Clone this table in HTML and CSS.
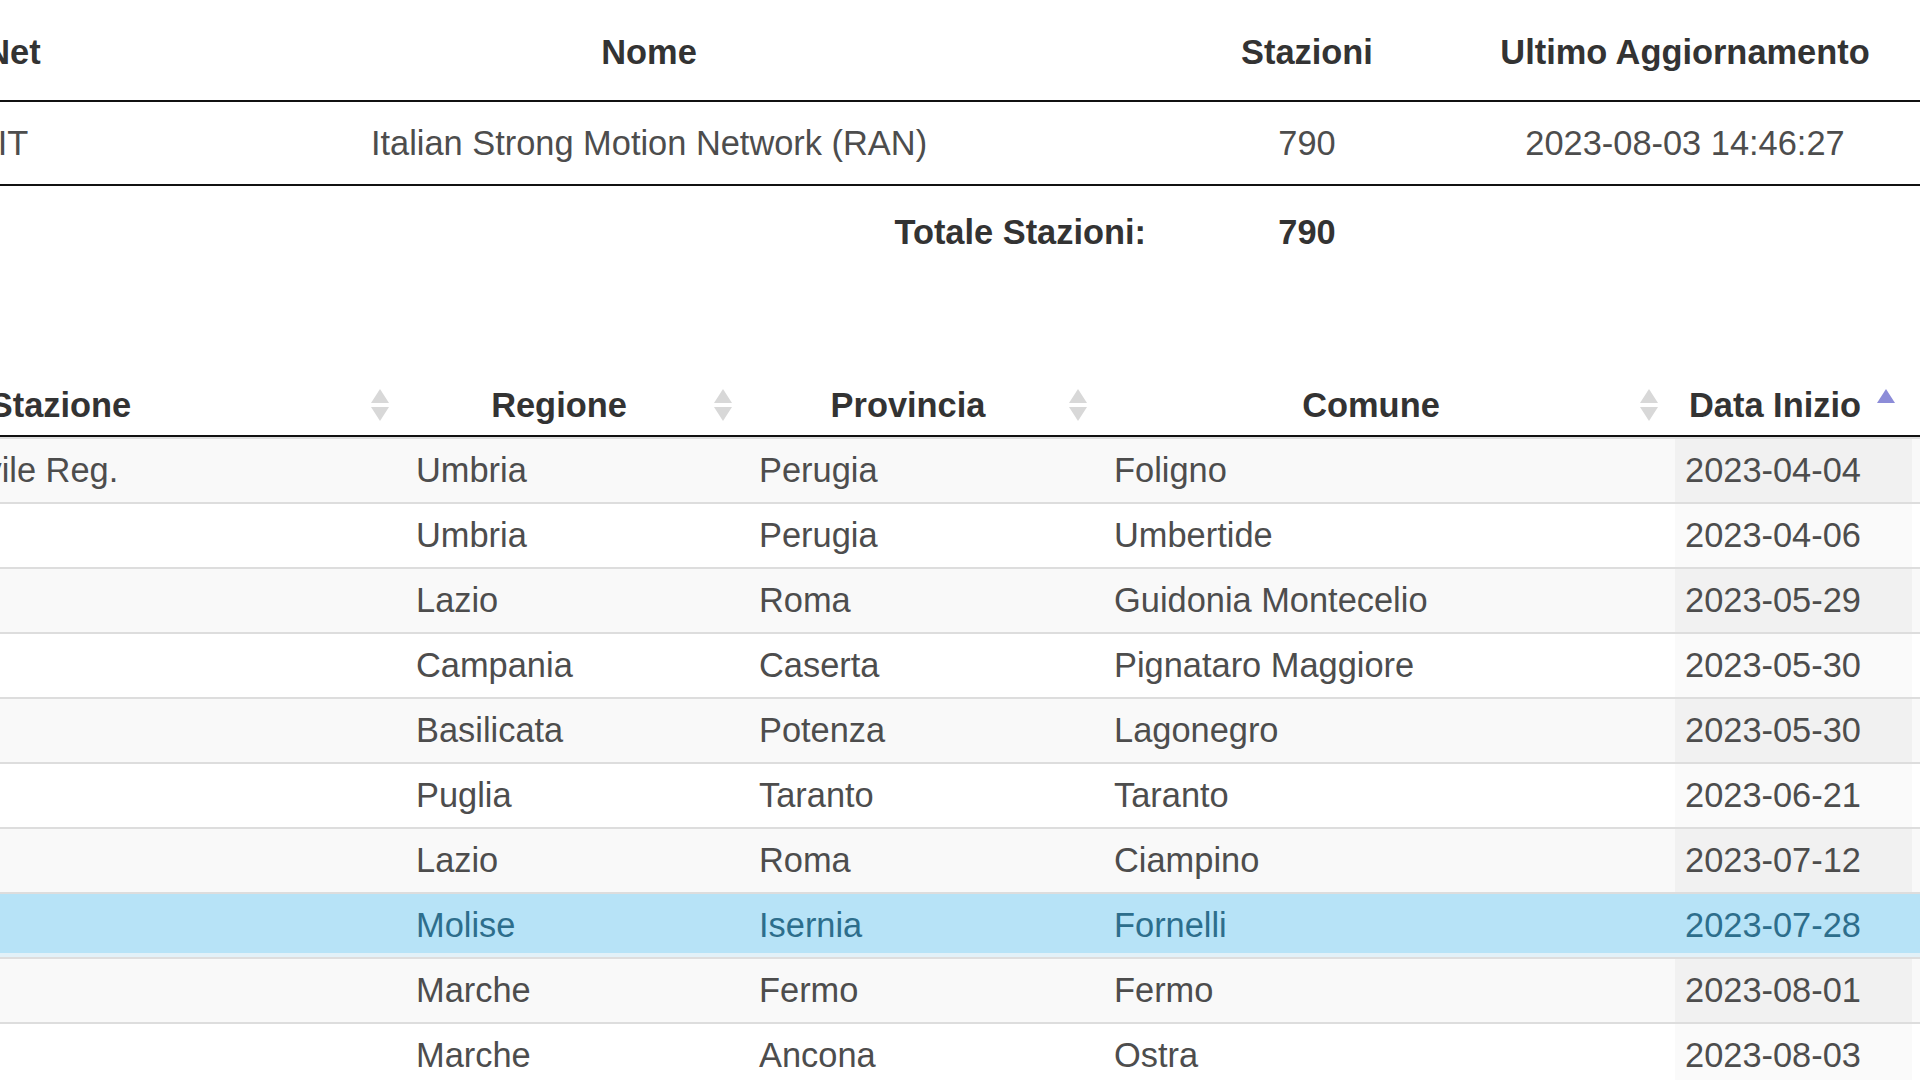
FILE: index.html
```html
<!DOCTYPE html>
<html lang="it">
<head>
<meta charset="utf-8">
<title>Stazioni</title>
<link rel="stylesheet" href="styles.css">
</head>
<body>
<div class="page">
  <div class="net-table">
    <div class="net-row net-head">
      <div class="cell">Net</div>
      <div class="cell">Nome</div>
      <div class="cell">Stazioni</div>
      <div class="cell">Ultimo Aggiornamento</div>
      <div class="cell"></div>
    </div>
    <div class="net-row net-body">
      <div class="cell">IT</div>
      <div class="cell">Italian Strong Motion Network (RAN)</div>
      <div class="cell">790</div>
      <div class="cell">2023-08-03 14:46:27</div>
      <div class="cell"></div>
    </div>
    <div class="net-row net-total">
      <div class="cell total-label">Totale Stazioni:</div>
      <div class="cell">790</div>
      <div class="cell"></div>
      <div class="cell"></div>
    </div>
  </div>

  <div class="st-table">
    <div class="st-row st-head">
      <div class="th"><span class="th-text">Stazione</span><svg class="sort" width="22" height="34" viewBox="0 0 22 34"><path d="M11 1 L20 15 H2 Z"/><path d="M2 19 H20 L11 33 Z"/></svg></div>
      <div class="th"><span class="th-text">Regione</span><svg class="sort" width="22" height="34" viewBox="0 0 22 34"><path d="M11 1 L20 15 H2 Z"/><path d="M2 19 H20 L11 33 Z"/></svg></div>
      <div class="th"><span class="th-text">Provincia</span><svg class="sort" width="22" height="34" viewBox="0 0 22 34"><path d="M11 1 L20 15 H2 Z"/><path d="M2 19 H20 L11 33 Z"/></svg></div>
      <div class="th"><span class="th-text">Comune</span><svg class="sort" width="22" height="34" viewBox="0 0 22 34"><path d="M11 1 L20 15 H2 Z"/><path d="M2 19 H20 L11 33 Z"/></svg></div>
      <div class="th"><span class="th-text">Data Inizio</span><svg class="sort asc" width="22" height="34" viewBox="0 0 22 34"><path d="M11 1 L20 15 H2 Z"/></svg></div>
      <div class="th"><span class="th-text"></span></div>
    </div>

    <div class="st-row odd">
      <div class="td first">Protezione Civile Reg.</div><div class="td">Umbria</div><div class="td">Perugia</div><div class="td">Foligno</div><div class="td sorted">2023-04-04</div><div class="td"></div>
    </div>
    <div class="st-row even">
      <div class="td first"></div><div class="td">Umbria</div><div class="td">Perugia</div><div class="td">Umbertide</div><div class="td sorted">2023-04-06</div><div class="td"></div>
    </div>
    <div class="st-row odd">
      <div class="td first"></div><div class="td">Lazio</div><div class="td">Roma</div><div class="td">Guidonia Montecelio</div><div class="td sorted">2023-05-29</div><div class="td"></div>
    </div>
    <div class="st-row even">
      <div class="td first"></div><div class="td">Campania</div><div class="td">Caserta</div><div class="td">Pignataro Maggiore</div><div class="td sorted">2023-05-30</div><div class="td"></div>
    </div>
    <div class="st-row odd">
      <div class="td first"></div><div class="td">Basilicata</div><div class="td">Potenza</div><div class="td">Lagonegro</div><div class="td sorted">2023-05-30</div><div class="td"></div>
    </div>
    <div class="st-row even">
      <div class="td first"></div><div class="td">Puglia</div><div class="td">Taranto</div><div class="td">Taranto</div><div class="td sorted">2023-06-21</div><div class="td"></div>
    </div>
    <div class="st-row odd">
      <div class="td first"></div><div class="td">Lazio</div><div class="td">Roma</div><div class="td">Ciampino</div><div class="td sorted">2023-07-12</div><div class="td"></div>
    </div>
    <div class="st-row even highlight">
      <div class="td first"></div><div class="td">Molise</div><div class="td">Isernia</div><div class="td">Fornelli</div><div class="td sorted">2023-07-28</div><div class="td"></div>
    </div>
    <div class="st-row odd">
      <div class="td first"></div><div class="td">Marche</div><div class="td">Fermo</div><div class="td">Fermo</div><div class="td sorted">2023-08-01</div><div class="td"></div>
    </div>
    <div class="st-row even">
      <div class="td first"></div><div class="td">Marche</div><div class="td">Ancona</div><div class="td">Ostra</div><div class="td sorted">2023-08-03</div><div class="td"></div>
    </div>
  </div>
</div>
</body>
</html>
```

FILE: styles.css
```css
html, body {
  margin: 0;
  padding: 0;
  background: #ffffff;
}

body {
  overflow: hidden;
  font-family: "Liberation Sans", Arial, sans-serif;
  font-size: 34.4px;
  color: #4d4d4d;
}

.page {
  width: 1920px;
  height: 1080px;
  overflow: hidden;
  box-sizing: border-box;
  padding-top: 5px;
}

/* ---------- network table ---------- */
.net-table {
  margin-left: -116px;
  width: 2128px;
}

.net-row {
  display: grid;
  grid-template-columns: 258px 1014px 302px 454px 100px;
}

.net-row .cell {
  display: flex;
  align-items: center;
  justify-content: center;
  padding: 0 10px;
  white-space: nowrap;
}

.net-head {
  height: 95px;
  border-bottom: 2px solid #111;
  font-weight: bold;
  color: #333;
}

.net-body {
  height: 82px;
  border-bottom: 2px solid #111;
}

.net-total {
  height: 93px;
  font-weight: bold;
  color: #333;
}

.net-total .total-label {
  grid-column: span 2;
  justify-content: flex-end;
}

/* ---------- stations table ---------- */
.st-table {
  margin-top: 96px;
  margin-left: -248px;
  width: 2460px;
}

.st-row {
  display: grid;
  grid-template-columns: 654px 343px 355px 571px 237px 300px;
  height: 63px;
}

.st-head {
  height: 60px;
  border-bottom: 2px solid #111;
  font-weight: bold;
  color: #333;
}

.th {
  display: flex;
  align-items: center;
  padding: 0 15px 0 10px;
  white-space: nowrap;
}

.th-text {
  flex: 1;
  text-align: center;
  margin-right: 10px;
}

.sort {
  flex: none;
  fill: #d8d8d8;
}

.sort.asc {
  fill: #8c8cd8;
}

.st-row + .st-row:not(.st-head) {
  border-top: 2px solid #dddddd;
}

.st-head + .st-row {
  border-top: none;
}

.td {
  display: flex;
  align-items: center;
  padding: 0 10px;
  white-space: nowrap;
  overflow: hidden;
}

.td.first {
  padding-left: 26px;
}

.odd {
  background: #f9f9f9;
}

.even {
  background: #ffffff;
}

.odd .sorted {
  background: #f1f1f1;
}

.even .sorted {
  background: #fafafa;
}

.st-row.highlight {
  background: #b7e3f7;
  border-top-color: #9dc9dd;
  color: #2d6e8c;
  box-shadow: inset 0 -4px 0 #e2f1f8;
}

.st-row.highlight .sorted {
  background: transparent;
}
```
